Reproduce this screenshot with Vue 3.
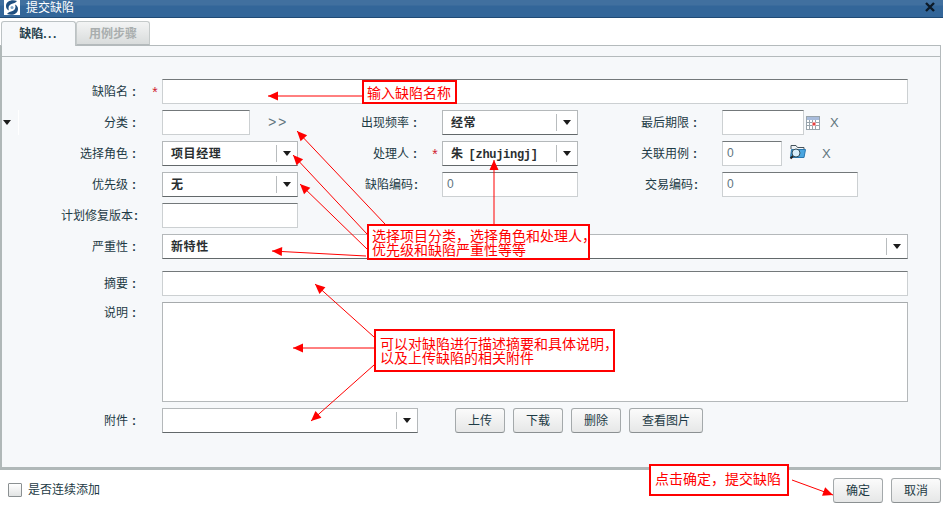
<script setup>
const arrows = [
  { from: [362, 96], to: [268, 96] },
  { from: [385, 224], to: [297, 131] },
  { from: [367, 234], to: [293, 155] },
  { from: [367, 249], to: [300, 184] },
  { from: [366, 256], to: [272, 251] },
  { from: [494, 224], to: [494, 160] },
  { from: [374, 337], to: [315, 284] },
  { from: [374, 348], to: [293, 348] },
  { from: [374, 365], to: [311, 421] },
  { from: [792, 480], to: [833, 495] },
]
const head = 10
const heads = arrows.map(({ from, to }) => {
  const dx = to[0] - from[0]
  const dy = to[1] - from[1]
  const len = Math.hypot(dx, dy)
  const ux = dx / len
  const uy = dy / len
  const bx = to[0] - ux * head
  const by = to[1] - uy * head
  const nx = -uy * 4.5
  const ny = ux * 4.5
  return `${to[0]},${to[1]} ${bx + nx},${by + ny} ${bx - nx},${by - ny}`
})
const uploadButtons = ['上传', '下载', '删除', '查看图片']
</script>

<template>
  <div class="dialog">
    <header class="titlebar">
      <svg class="logo" width="16" height="15" viewBox="0 0 16 15">
        <rect width="16" height="15" fill="#fff" />
        <path d="M13 1C8 -1 2 1 2 6c0 2 1 3.500 3 4.500C4 8 4.500 5 7.500 4c2-.7 4-.8 5.500-3z" fill="#1f4f80" />
        <path d="M3 14c5 2 11 0 11-5 0-2-1-3.500-3-4.500 1 2.500.5 5.500-2.500 6.500-2 .7-4 .8-5.500 3z" fill="#1f4f80" />
        <circle cx="8" cy="7.500" r="1.500" fill="#7fa6c8" />
      </svg>
      <span class="title">提交缺陷</span>
      <svg class="close" width="10" height="10" viewBox="0 0 10 10">
        <path d="M1 1l8 8M9 1l-8 8" stroke="#0c1a28" stroke-width="2.400" />
      </svg>
    </header>

    <nav class="tabs">
      <div class="tab active">缺陷<span class="dots">...</span></div>
      <div class="tab">用例步骤</div>
    </nav>

    <main class="panel">
      <div class="strip"></div>
      <form class="form" @submit.prevent>
        <div class="row wide-row first">
          <label>缺陷名<span class="c">:</span></label><i class="star">*</i>
          <div class="field wide"></div>
        </div>

        <div class="row">
          <span class="handle"><b class="tri"></b></span>
          <label>分类<span class="c">:</span></label><i></i>
          <div class="cell">
            <div class="field w88"></div>
            <span class="more">&gt;&gt;</span>
          </div>
          <label>出现频率<span class="c r">:</span></label><i></i>
          <div class="select"><b>经常</b><span class="drop"><em class="tri"></em></span></div>
          <label>最后期限<span class="c r">:</span></label><i></i>
          <div class="cell">
            <div class="field w82"></div>
            <svg class="cal" width="14" height="14" viewBox="0 0 14 14">
              <rect x=".5" y=".5" width="13" height="13" fill="#fff" stroke="#98a4ac" />
              <rect x="1" y="1" width="12" height="3" fill="#a8bcdc" />
              <path d="M1 6.500h12M1 9.500h12M3.500 4v9M6.500 4v9M9.500 4v9" stroke="#98a4ac" />
              <rect x="7" y="7" width="2" height="2" fill="#e8403f" />
              <path d="M6.500 6.500h3v3h-3z" fill="none" stroke="#f0a0a0" />
            </svg>
            <span class="clear cal-clear">X</span>
          </div>
        </div>

        <div class="row">
          <label>选择角色<span class="c">:</span></label><i></i>
          <div class="select"><b>项目经理</b><span class="drop"><em class="tri"></em></span></div>
          <label>处理人<span class="c r">:</span></label><i class="star s2">*</i>
          <div class="select"><b>朱<span class="mono">[zhujingj]</span></b><span class="drop"><em class="tri"></em></span></div>
          <label>关联用例<span class="c r">:</span></label><i></i>
          <div class="cell">
            <div class="field w60"><span class="zero">0</span></div>
            <svg class="folder" width="17" height="16" viewBox="0 0 17 16">
              <path d="M2 5V1.500h5L8.500 3.500H15V6" fill="#eef3f6" stroke="#45535c" />
              <path d="M2.500 5.500h14l-1.500 8H1.500z" fill="#4aa6e0" stroke="#2a78b0" />
              <circle cx="7" cy="9" r="4" fill="#d8eefa" stroke="#33505f" />
              <path d="M4 12L1.500 14.500" stroke="#222" stroke-width="2" />
            </svg>
            <span class="clear case-clear">X</span>
          </div>
        </div>

        <div class="row">
          <label>优先级<span class="c">:</span></label><i></i>
          <div class="select"><b>无</b><span class="drop"><em class="tri"></em></span></div>
          <label>缺陷编码<span class="c2">:</span></label><i></i>
          <div class="field"><span class="zero">0</span></div>
          <label>交易编码<span class="c2">:</span></label><i></i>
          <div class="field"><span class="zero">0</span></div>
        </div>

        <div class="row">
          <label class="inset">计划修复版本<span class="c2">:</span></label><i></i>
          <div class="field"></div>
        </div>

        <div class="row wide-row gap-after">
          <label>严重性<span class="c">:</span></label><i></i>
          <div class="select wide"><b>新特性</b><span class="drop"><em class="tri"></em></span></div>
        </div>

        <div class="row wide-row">
          <label>摘要<span class="c">:</span></label><i></i>
          <div class="field wide"></div>
        </div>

        <div class="row wide-row tall">
          <label>说明<span class="c">:</span></label><i></i>
          <div class="field wide area"></div>
        </div>

        <div class="row wide-row">
          <label>附件<span class="c">:</span></label><i></i>
          <div class="attach">
            <div class="select w256"><span class="drop"><em class="tri"></em></span></div>
            <div class="buttons">
              <button v-for="b in uploadButtons" :key="b" type="button" class="btn" :class="{ long: b.length > 2 }">{{ b }}</button>
            </div>
          </div>
        </div>
      </form>
    </main>

    <footer class="footer">
      <label class="check"><span class="box"></span>是否连续添加</label>
      <div class="actions">
        <button type="button" class="btn">确定</button>
        <button type="button" class="btn">取消</button>
      </div>
    </footer>

    <svg class="arrows" width="943" height="505" viewBox="0 0 943 505">
      <g v-for="(a, i) in arrows" :key="i">
        <line :x1="a.from[0]" :y1="a.from[1]" :x2="a.to[0]" :y2="a.to[1]" stroke="#f00" stroke-width="1" />
        <polygon :points="heads[i]" fill="#f00" />
      </g>
    </svg>

    <div class="note n1">输入缺陷名称</div>
    <div class="note n2">选择项目分类，选择角色和处理人，<br />优先级和缺陷严重性等等</div>
    <div class="note n3">可以对缺陷进行描述摘要和具体说明，<br />以及上传缺陷的相关附件</div>
    <div class="note n4">点击确定，提交缺陷</div>
  </div>
</template>

<style>
html, body { margin: 0; background: #fff; }
</style>

<style scoped>
.dialog {
  position: relative;
  width: 943px;
  height: 505px;
  overflow: hidden;
  background: #fff;
  font: 12px/16px "Liberation Sans", "Noto Sans CJK SC", sans-serif;
  color: #1d3a45;
}
.titlebar {
  height: 18px;
  display: flex;
  align-items: center;
  background: linear-gradient(#41709f 0, #41709f 5px, #336699 6px, #336699 17px, #1f4a75 17px);
  position: relative;
}
.logo { margin: -3px 0 0 4px; }
.title { margin: -2px 0 0 6px; color: #fff; }
.close { position: absolute; left: 925px; top: 2px; }

.tabs { display: flex; height: 24px; margin-top: 3px; padding-left: 1px; align-items: flex-end; }
.tab {
  width: 74px;
  height: 24px;
  box-sizing: border-box;
  line-height: 25px;
  text-align: center;
  border: 1px solid #c5caca;
  border-bottom: 1px solid #b4babc;
  border-radius: 3px 3px 0 0;
  color: #a9aeae;
  font-weight: bold;
  background: linear-gradient(#f3f4f4, #d9dcdc);
}
.tab.active {
  width: 75px;
  height: 25px;
  color: #2a444e;
  background: #f6f8fa;
  border-color: #bcc2c4;
  border-bottom: 0;
  position: relative;
  z-index: 1;
  margin-bottom: -1px;
}
.dots { letter-spacing: 1.500px; }
.panel {
  width: 941px;
  height: 425px;
  box-sizing: border-box;
  border-top: 1px solid #b4babc;
  border-right: 1px solid #b4babc;
  border-bottom: 3px solid #b0b8b8;
  border-left: 2px solid #b0b8b8;
  background: #f6f8fa;
}
.strip { height: 10px; border-bottom: 1px solid #b4babc; }
.form { padding-top: 22px; }
.row {
  position: relative;
  display: grid;
  grid-template-columns: 138px 22px 136px 120px 24px 136px 120px 24px 1fr;
  height: 25px;
  margin-bottom: 6px;
  align-items: center;
}
.row label { text-align: right; white-space: nowrap; padding-top: 1px; }
.row label.inset { padding-right: 2px; }
.c { display: inline-block; width: 12px; text-align: center; font-weight: bold; }
.c.r { margin-right: -3px; }
.c2 { display: inline-block; width: 5px; text-align: right; font-weight: bold; }
.row > i { font-style: normal; text-align: center; color: #d02030; font-size: 14px; }
.row > .star { padding-left: 8px; padding-top: 1px; }
.row > .s2 { padding-left: 10px; }
.cell { display: flex; align-items: center; height: 25px; white-space: nowrap; }
.gap-after { margin-bottom: 12px; }
.tall { height: 100px; align-items: start; }
.tall label { padding-top: 3px; }

.field {
  box-sizing: border-box;
  height: 25px;
  width: 136px;
  background: #fff;
  border: 1px solid #ccd0d2;
  border-top: 1px solid #73787a;
  padding: 0 4px;
  line-height: 22px;
}
.w88 { width: 88px; flex: none; }
.w82 { width: 82px; flex: none; }
.w60 { width: 60px; flex: none; }
.wide { width: 746px; }
.area { height: 100px; border-color: #b4b8ba; border-top-color: #a6aaac; }
.zero { color: #60757e; font-size: 12px; }
.select {
  position: relative;
  box-sizing: border-box;
  height: 25px;
  width: 136px;
  background: #fff;
  border: 1px solid #b4b8ba;
  border-bottom: 1px solid #62686a;
  padding-left: 8px;
  line-height: 25px;
}
.select.wide { width: 746px; }
.select b { font-weight: bold; color: #2a2f31; letter-spacing: .6px; }
.mono { font-family: "Liberation Mono", monospace; letter-spacing: -.3px; font-size: 12px; margin-left: 5px; }
.drop {
  position: absolute;
  right: 0;
  top: 3px;
  width: 20px;
  height: 17px;
  border-left: 1px solid #b8bcbe;
  display: flex;
  align-items: center;
  justify-content: center;
}
.w256 { width: 256px; flex: none; }
.tri {
  display: block;
  width: 0;
  height: 0;
  border-left: 4px solid transparent;
  border-right: 4px solid transparent;
  border-top: 5px solid #1c1c1c;
}
.handle {
  position: absolute;
  left: 1px;
  top: 0;
  width: 15px;
  height: 25px;
  display: flex;
  align-items: center;
  border-right: 1px solid #fff;
}
.more { margin-left: 18px; color: #60757e; letter-spacing: 1.500px; font-size: 14px; font-family: "Liberation Mono", monospace; padding-top: 1px; }
.cal { margin-left: 2px; flex: none; margin-top: 1px; }
.folder { margin-left: 7px; flex: none; margin-top: -3px; }
.clear { color: #60757e; font-size: 13px; }
.cal-clear { margin-left: 10px; }
.case-clear { margin-left: 16px; }
.attach { display: flex; align-items: center; grid-column: 3 / 10; }
.buttons { display: flex; gap: 8px; margin-left: 37px; }
.btn {
  box-sizing: border-box;
  width: 50px;
  height: 25px;
  padding: 0;
  border: 1px solid #a4a9ab;
  border-bottom-color: #8b9092;
  border-radius: 3px;
  background: linear-gradient(#fbfbfb, #e6e7e7);
  font: inherit;
  color: #1d3a45;
}
.btn.long { width: 74px; }
.wide-row { grid-template-columns: 138px 22px 1fr; }

.footer {
  position: relative;
  display: flex;
  align-items: center;
  justify-content: space-between;
  height: 35px;
  padding: 0 2px 0 8px;
}
.check { display: flex; align-items: center; gap: 6px; padding-top: 5px; }
.box {
  width: 12px;
  height: 12px;
  border: 1px solid #8b9092;
  background: linear-gradient(#fff, #e2e4e4);
  border-radius: 1px;
}
.actions { display: flex; gap: 8px; padding-top: 6px; }

.arrows { position: absolute; left: 0; top: 0; pointer-events: none; }
.note {
  position: absolute;
  box-sizing: border-box;
  border: 2px solid #f00;
  background: #fff;
  color: #f00;
  font-size: 14px;
  white-space: nowrap;
}
.n1 { left: 362px; top: 80px; width: 95px; height: 24px; padding: 2px 0 0 3px; line-height: 18px; }
.n2 { left: 367px; top: 224px; width: 223px; height: 36px; padding: 3px 0 0 3px; line-height: 14px; }
.n3 { left: 374px; top: 329px; width: 241px; height: 43px; padding: 6px 0 0 4px; line-height: 14px; }
.n4 { left: 649px; top: 464px; width: 140px; height: 32px; padding: 3px 0 0 4px; line-height: 20px; }
</style>
